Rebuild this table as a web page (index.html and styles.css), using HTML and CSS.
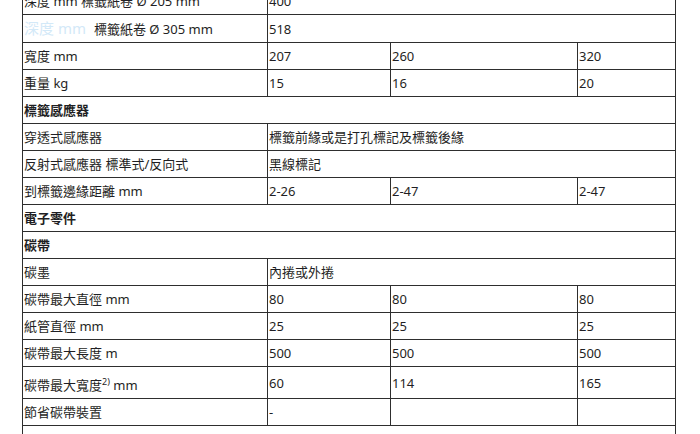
FILE: index.html
```html
<!DOCTYPE html>
<html lang="zh-Hant">
<head>
<meta charset="utf-8">
<title>規格表</title>
<link rel="stylesheet" href="styles.css">
</head>
<body>
<table class="spec">
  <colgroup>
    <col class="c1"><col class="c2"><col class="c3"><col class="c4">
  </colgroup>
  <tbody>
    <tr><td>深度 mm 標籤紙卷 Ø 205 mm</td><td colspan="3">400</td></tr>
    <tr><td><span class="faded">深度 mm</span><span class="indent">標籤紙卷 Ø 305 mm</span></td><td colspan="3">518</td></tr>
    <tr><td>寬度 mm</td><td>207</td><td>260</td><td>320</td></tr>
    <tr><td>重量 kg</td><td>15</td><td>16</td><td>20</td></tr>
    <tr><td colspan="4" class="head">標籤感應器</td></tr>
    <tr><td>穿透式感應器</td><td colspan="3">標籤前緣或是打孔標記及標籤後緣</td></tr>
    <tr><td>反射式感應器 標準式/反向式</td><td colspan="3">黑線標記</td></tr>
    <tr><td>到標籤邊緣距離 mm</td><td>2-26</td><td>2-47</td><td>2-47</td></tr>
    <tr><td colspan="4" class="head">電子零件</td></tr>
    <tr><td colspan="4" class="head">碳帶</td></tr>
    <tr><td>碳墨</td><td colspan="3">內捲或外捲</td></tr>
    <tr><td>碳帶最大直徑 mm</td><td>80</td><td>80</td><td>80</td></tr>
    <tr><td>紙管直徑 mm</td><td>25</td><td>25</td><td>25</td></tr>
    <tr><td>碳帶最大長度 m</td><td>500</td><td>500</td><td>500</td></tr>
    <tr><td>碳帶最大寬度<sup>2)</sup> mm</td><td>60</td><td>114</td><td>165</td></tr>
    <tr><td>節省碳帶裝置</td><td>-</td><td></td><td></td></tr>
    <tr><td colspan="4" class="note">¹⁾ 依型號而定</td></tr>
  </tbody>
</table>
</body>
</html>
```
FILE: styles.css
```css
html, body {
  margin: 0;
  padding: 0;
  background: #ffffff;
}
body {
  font-family: "Noto Sans", "Noto Sans CJK TC", sans-serif;
  font-size: 13px;
  color: #1f1f24;
  overflow: hidden;
}
.spec {
  border-collapse: collapse;
  table-layout: fixed;
  width: 654px;
  margin: -13px 0 0 22px;
}
.c1 { width: 245px; }
.c2 { width: 123px; }
.c3 { width: 187px; }
.c4 { width: 98px; }
.spec td {
  border: 1px solid #2e2e2e;
  padding: 4px 0 4px 1px;
  line-height: 18px;
  vertical-align: middle;
  white-space: nowrap;
  overflow: hidden;
}
.spec td.head {
  font-weight: bold;
}
.faded {
  color: #d3e9f8;
  font-size: 15px;
}
.indent {
  margin-left: 8px;
}
.spec sup {
  font-size: 9px;
  line-height: 22px;
  vertical-align: 5px;
}
.spec td.note {
  padding-top: 7px;
  padding-left: 5px;
}
```
